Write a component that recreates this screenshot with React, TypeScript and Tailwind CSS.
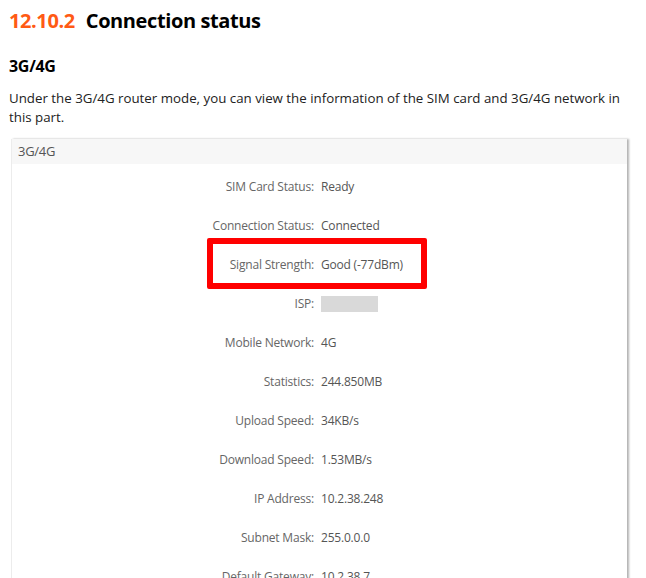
import React from "react";

const rows: [string, string][] = [
  ["SIM Card Status:", "Ready"],
  ["Connection Status:", "Connected"],
  ["Signal Strength:", "Good (-77dBm)"],
  ["ISP:", ""],
  ["Mobile Network:", "4G"],
  ["Statistics:", "244.850MB"],
  ["Upload Speed:", "34KB/s"],
  ["Download Speed:", "1.53MB/s"],
  ["IP Address:", "10.2.38.248"],
  ["Subnet Mask:", "255.0.0.0"],
  ["Default Gateway:", "10.2.38.7"],
];

export default function App() {
  return (
    <div className="w-[646px] h-[578px] overflow-hidden bg-white text-black" style={{ fontFamily: "'Open Sans', 'Liberation Sans', sans-serif" }}>
      <div className="pl-[9px] pt-[6px]">
        <h1 className="text-[20px] leading-[30px] font-bold tracking-[-0.4px]">
          <span className="text-[#ff5a14]">12.10.2</span>
          <span className="ml-[11px]">Connection status</span>
        </h1>
        <h2 className="mt-[19px] text-[16px] leading-[22px] font-bold tracking-[-0.3px]">3G/4G</h2>
        <p className="mt-[12px] text-[13.3px] leading-[19px] text-[#222] w-[614px]">
          Under the 3G/4G router mode, you can view the information of the SIM card and 3G/4G network in this part.
        </p>
      </div>
      <div className="ml-[11px] mt-[12px] w-[616px] h-[460px] bg-white border-l border-[#ececec] shadow-[2px_0_2px_rgba(0,0,0,0.3)]">
        <div className="h-[25px] bg-[#f7f7f7] pl-[6px] text-[13px] leading-[25px] text-[#555] tracking-[-0.3px]">3G/4G</div>
        <div className="pt-[3px]">
          {rows.map(([label, value]) => (
            <div key={label} className="relative flex h-[39px] items-center text-[12px] text-[#666] tracking-[-0.2px]">
              <div className="w-[302px] text-right">{label}</div>
              <div className="ml-[7px] text-[#555]">
                {label === "ISP:" ? <div className="w-[57px] h-[16px] bg-[#d9d9d9]" /> : value}
              </div>
              {label === "Signal Strength:" && (
                <div className="absolute left-[195px] top-[-7px] w-[220px] h-[51px] border-[6px] border-[#ff0000] rounded-[2px]" />
              )}
            </div>
          ))}
        </div>
      </div>
    </div>
  );
}
